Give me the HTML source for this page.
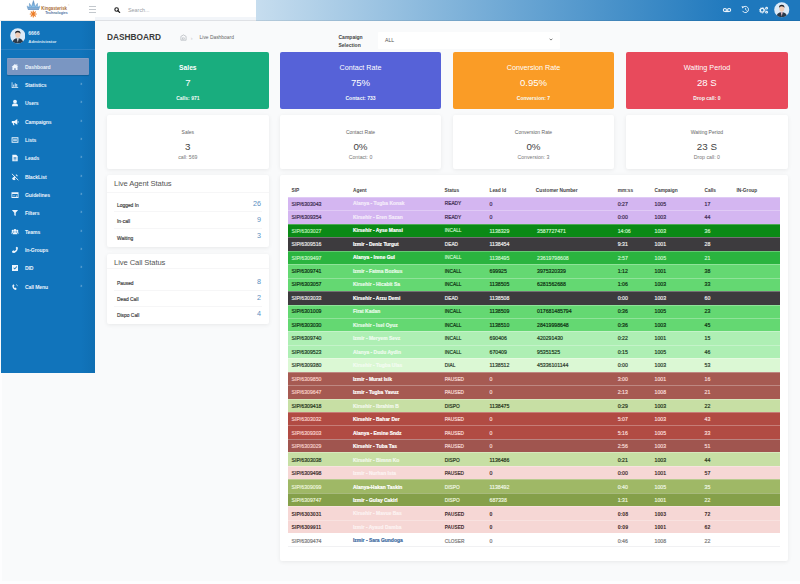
<!DOCTYPE html>
<html><head><meta charset="utf-8">
<style>
*{margin:0;padding:0;box-sizing:border-box}
html,body{width:800px;height:584px;overflow:hidden}
body{background:#f9fafb;font-family:"Liberation Sans",sans-serif;position:relative;color:#333}
.abs{position:absolute}
#hdr{position:absolute;left:0;top:0;width:800px;height:21px;background:linear-gradient(to right,#ffffff 95px,#1e78bd 735px,#1e78bd 800px)}
#hdrL{position:absolute;left:0;top:0;width:256px;height:17.3px;background:#fff}
#hdrL2{position:absolute;left:95px;top:17.3px;width:161px;height:3.7px;background:#f2f5f9}
#hdrline{position:absolute;left:0;top:20.3px;width:800px;height:1px;background:rgba(0,0,0,0.08)}
#side{position:absolute;left:1px;top:21px;width:93.7px;height:351.7px;background:linear-gradient(to right,#1174bb 85%,#0f6eb2 100%)}
.mi{position:absolute;left:25px;font-size:5.1px;letter-spacing:-0.12px;font-weight:bold;color:#eaf3fb;line-height:8px;white-space:nowrap}
.chev{position:absolute;left:79.5px;width:1.8px;height:1.8px;border-right:0.5px solid rgba(255,255,255,0.3);border-bottom:0.5px solid rgba(255,255,255,0.3);transform:rotate(-45deg)}
.card{position:absolute;border-radius:2px;text-align:center}
.c1t{position:absolute;left:0;width:100%;font-size:7.2px;line-height:8px;color:#fff}
.c1v{position:absolute;left:0;width:100%;font-size:9.6px;line-height:10px;color:#fff}
.c1s{position:absolute;left:0;width:100%;font-size:5px;font-weight:bold;line-height:6px;color:#f4fbf8}
.wc{background:#fff;box-shadow:0 1px 4px rgba(0,0,0,0.075)}
.c2t{position:absolute;left:0;width:100%;font-size:5.0px;line-height:6px;color:#666}
.c2v{position:absolute;left:0;width:100%;font-size:9.8px;line-height:10px;color:#444}
.c2s{position:absolute;left:0;width:100%;font-size:5.2px;line-height:6px;color:#777}
.pt{position:absolute;font-size:7.6px;color:#555;white-space:nowrap;letter-spacing:-0.1px}
.lr{position:absolute;left:10px;font-size:4.9px;font-weight:normal;-webkit-text-stroke:0.15px #3a3a3a;color:#3a3a3a;white-space:nowrap}
.lv{position:absolute;right:8px;font-size:7.2px;color:#5b8fbf;white-space:nowrap}
.hl{position:absolute;left:7px;right:7px;height:1px;background:#f6f6f7}
.th{position:absolute;top:188px;font-size:4.8px;font-weight:bold;color:#444;white-space:nowrap}
#tbody{position:absolute;left:288px;top:197px;width:492px;border-bottom:1px solid #f1f1f3}
.tr{position:relative;width:492px;height:13.45px;box-shadow:inset 0 0.9px 0 rgba(255,255,255,0.28)}
.tr span{position:absolute;top:3.2px;font-size:5.2px;line-height:6px;white-space:nowrap;-webkit-text-stroke:0.18px currentColor}
</style></head><body>
<div id="hdr"></div>
<div id="hdrL"></div>
<div id="hdrL2"></div>
<div id="hdrline"></div>

<!-- logo -->
<svg class="abs" style="left:24px;top:0px" width="48" height="19" viewBox="0 0 48 19">
  <defs><linearGradient id="cg" x1="0" y1="0" x2="0" y2="1"><stop offset="0" stop-color="#4f88bf"/><stop offset="0.75" stop-color="#8cc0e8"/><stop offset="1" stop-color="#5d92c4"/></linearGradient></defs>
  <path d="M3.1 5.9 L5.2 7.3 L5.5 3.3 L7.5 6.6 L9.4 0.4 L11.3 6.6 L13.4 3.3 L13.7 7.3 L15.8 5.9 L15.2 8.6 L3.7 8.6 Z" fill="url(#cg)" stroke="#4b80b5" stroke-width="0.35"/>
  <path d="M3.9 9.4 L15 9.4" stroke="#5a8cbd" stroke-width="0.9"/>
  <g stroke="#ec7a22" stroke-width="1.15" stroke-linecap="round">
    <path d="M9.25 11 L9.25 17"/><path d="M6.25 14 L12.25 14"/><path d="M7.15 11.9 L11.35 16.1"/><path d="M7.15 16.1 L11.35 11.9"/>
  </g>
  <circle cx="9.25" cy="14" r="1.2" fill="#ec7a22"/>
  <text x="17.3" y="10" font-family="Liberation Sans" font-weight="bold" font-size="5" fill="#a96a30" textLength="25.6" lengthAdjust="spacingAndGlyphs">Kingasterisk</text>
  <text x="44" y="5.6" font-family="Liberation Sans" font-size="2" fill="#b8773c">®</text>
  <text x="21.2" y="14" font-family="Liberation Sans" font-weight="bold" font-size="3.6" fill="#4d72a0" textLength="22.6" lengthAdjust="spacingAndGlyphs">Technologies</text>
</svg>
<!-- hamburger -->
<div class="abs" style="left:88.5px;top:6px;width:7.5px;height:0.8px;background:#c3c8cd"></div>
<div class="abs" style="left:88.5px;top:9.2px;width:7.5px;height:0.8px;background:#c3c8cd"></div>
<div class="abs" style="left:88.5px;top:12.4px;width:7.5px;height:0.8px;background:#c3c8cd"></div>
<!-- search icon -->
<svg class="abs" style="left:114.2px;top:6.6px" width="7" height="6" viewBox="0 0 7 6"><circle cx="2.6" cy="2.5" r="1.75" fill="none" stroke="#1a1a1a" stroke-width="1.15"/><path d="M3.9 3.8 L5.6 5.4" stroke="#1a1a1a" stroke-width="1.3" stroke-linecap="round"/></svg>
<div class="abs" style="left:128px;top:6.6px;font-size:5.4px;color:#9aa0a6">Search...</div>

<!-- header right icons -->
<svg class="abs" style="left:722px;top:5.5px" width="10" height="8" viewBox="0 0 10 8"><circle cx="2.9" cy="4" r="1.55" fill="none" stroke="#eef5fc" stroke-width="1.1"/><circle cx="7.1" cy="4" r="1.55" fill="none" stroke="#eef5fc" stroke-width="1.1"/><rect x="2.9" y="5" width="4.2" height="1.1" fill="#eef5fc"/></svg>
<svg class="abs" style="left:740.5px;top:5px" width="9" height="9" viewBox="0 0 9 9"><path d="M1.9 2.6 A3.1 3.1 0 1 1 1.6 5.9" fill="none" stroke="#eef5fc" stroke-width="0.95"/><path d="M0.5 1.2 L2.9 1.5 L1.5 3.4 Z" fill="#eef5fc"/><path d="M4.6 2.9 L4.6 4.7 L5.8 5.5" fill="none" stroke="#eef5fc" stroke-width="0.8"/></svg>
<svg class="abs" style="left:758.5px;top:5.5px" width="10" height="8" viewBox="0 0 10 8"><circle cx="3.2" cy="4.3" r="1.9" fill="none" stroke="#eef5fc" stroke-width="1.3"/><circle cx="3.2" cy="4.3" r="2.7" fill="none" stroke="#eef5fc" stroke-width="0.9" stroke-dasharray="0.9 0.8"/><circle cx="7.6" cy="2.2" r="1.35" fill="#eef5fc"/><circle cx="7.6" cy="6.2" r="1.35" fill="#eef5fc"/><circle cx="7.6" cy="2.2" r="0.45" fill="#2a7fc1"/><circle cx="7.6" cy="6.2" r="0.45" fill="#2a7fc1"/></svg>
<svg class="abs" style="left:774px;top:2.3px" width="15.5" height="15.5" viewBox="0 0 16 16">
  <defs><clipPath id="av1"><circle cx="8" cy="8" r="7.8"/></clipPath></defs>
  <circle cx="8" cy="8" r="7.8" fill="#dceaf7"/>
  <g clip-path="url(#av1)">
    <path d="M2 16 Q3 10.5 8 10.5 Q13 10.5 14 16 Z" fill="#2b3a4a"/>
    <path d="M7 10.5 L8 15 L9 10.5 Z" fill="#f3c6cf"/>
    <ellipse cx="8" cy="6.8" rx="2.6" ry="3.2" fill="#f1cdb7"/>
    <path d="M5.2 6 Q5 2.8 8 2.8 Q11 2.8 10.8 6 Q10 4.4 8 4.4 Q6 4.4 5.2 6 Z" fill="#1f232b"/>
  </g>
</svg>

<div class="abs" style="left:0;top:372px;width:2px;height:212px;background:#fdfdfe"></div>
<div class="abs" style="left:0;top:581px;width:800px;height:3px;background:#fdfdfe"></div>
<!-- sidebar -->
<div id="side"></div>
<svg class="abs" style="left:9.6px;top:28.4px" width="15.6" height="15.6" viewBox="0 0 16 16">
  <defs><clipPath id="av2"><circle cx="8" cy="8" r="7.8"/></clipPath></defs>
  <circle cx="8" cy="8" r="7.8" fill="#dceaf7"/>
  <g clip-path="url(#av2)">
    <path d="M2 16 Q3 10.5 8 10.5 Q13 10.5 14 16 Z" fill="#2b3a4a"/>
    <path d="M7 10.5 L8 15 L9 10.5 Z" fill="#e9eef5"/>
    <ellipse cx="8" cy="6.8" rx="2.6" ry="3.2" fill="#f1cdb7"/>
    <path d="M5.2 6 Q5 2.8 8 2.8 Q11 2.8 10.8 6 Q10 4.4 8 4.4 Q6 4.4 5.2 6 Z" fill="#1f232b"/>
  </g>
</svg>
<div class="abs" style="left:28.3px;top:30.4px;font-size:5px;font-weight:bold;color:#e6f1fb">6666</div>
<div class="abs" style="left:28.3px;top:39.2px;font-size:4.3px;font-weight:bold;color:#d7e7f6">Administrator</div>
<div class="abs" style="left:1px;top:48.6px;width:93.7px;height:1.4px;background:#2b80c2"></div>
<div class="abs" style="left:6.8px;top:58.1px;width:82.2px;height:16.7px;background:#7a96c2;border-radius:1px;box-shadow:0 0.8px 1px rgba(0,0,0,0.18), inset 0 0.8px 0 rgba(255,255,255,0.12)"></div>
<svg class="abs" style="left:10.8px;top:62.50px" width="8" height="8" viewBox="0 0 8 8" fill="#eef5fc"><path d="M0.6 4.1 L3.9 1 L7.3 4.1 L6.5 4.1 L6.5 7 L4.7 7 L4.7 5.2 L3.2 5.2 L3.2 7 L1.4 7 L1.4 4.1 Z"/><rect x="5.4" y="1.2" width="0.9" height="1.8"/></svg><div class="mi" style="top:62.50px">Dashboard</div>
<svg class="abs" style="left:10.8px;top:80.85px" width="8" height="8" viewBox="0 0 8 8" fill="#eef5fc"><path d="M0.7 1.2 L1.4 1.2 L1.4 6.3 L7.2 6.3 L7.2 7 L0.7 7 Z"/><rect x="2.3" y="3.6" width="0.9" height="2.2"/><rect x="3.8" y="2.3" width="0.9" height="3.5"/><rect x="5.3" y="3" width="0.9" height="2.8"/></svg><div class="mi" style="top:80.85px">Statistics</div><i class="chev" style="top:82.8px"></i>
<svg class="abs" style="left:10.8px;top:99.20px" width="8" height="8" viewBox="0 0 8 8" fill="#eef5fc"><circle cx="4" cy="2.6" r="1.9"/><path d="M0.9 7.2 Q0.9 4.7 2.7 4.6 L5.3 4.6 Q7.1 4.7 7.1 7.2 Z"/></svg><div class="mi" style="top:99.20px">Users</div><i class="chev" style="top:101.2px"></i>
<svg class="abs" style="left:10.8px;top:117.55px" width="8" height="8" viewBox="0 0 8 8" fill="#eef5fc"><path d="M0.8 3 L3.4 3 L6.3 1 L6.3 6.8 L3.4 4.9 L2.8 4.9 L3.5 7.2 L2.3 7.2 L1.6 4.9 L0.8 4.9 Z"/><rect x="6.7" y="3.2" width="0.8" height="1.5"/></svg><div class="mi" style="top:117.55px">Campaigns</div><i class="chev" style="top:119.6px"></i>
<svg class="abs" style="left:10.8px;top:135.90px" width="8" height="8" viewBox="0 0 8 8" fill="#eef5fc"><path d="M0.6 1.2 L7.4 1.2 L7.4 6.8 L0.6 6.8 Z M1.5 2.2 L1.5 5.8 L6.5 5.8 L6.5 2.2 Z"/><rect x="2.1" y="2.9" width="3.8" height="0.7"/><rect x="2.1" y="4.3" width="3.8" height="0.7"/></svg><div class="mi" style="top:135.90px">Lists</div><i class="chev" style="top:137.9px"></i>
<svg class="abs" style="left:10.8px;top:154.25px" width="8" height="8" viewBox="0 0 8 8" fill="#eef5fc"><path d="M1.3 0.7 L5.2 0.7 L6.7 2.2 L6.7 7.3 L1.3 7.3 Z"/><rect x="2.6" y="3.2" width="2.8" height="0.6" fill="#1a72b8"/><rect x="2.6" y="4.4" width="2.8" height="0.6" fill="#1a72b8"/><rect x="2.6" y="5.6" width="2.8" height="0.6" fill="#1a72b8"/></svg><div class="mi" style="top:154.25px">Leads</div><i class="chev" style="top:156.2px"></i>
<svg class="abs" style="left:10.8px;top:172.60px" width="8" height="8" viewBox="0 0 8 8" fill="#eef5fc"><path d="M0.9 0.8 L7.3 7.2" stroke="#eef5fc" stroke-width="0.9"/><path d="M1.2 5.2 Q2.6 3.7 3.7 3.2 L4.7 4.2 L3.6 5.1 L4.6 6.6 L3.1 7.3 Q1.8 7.1 1.2 6 Z"/><path d="M5.2 1.2 L6.8 2.8 L6.2 3.6 L4.6 2 Z"/></svg><div class="mi" style="top:172.60px">BlackList</div><i class="chev" style="top:174.6px"></i>
<svg class="abs" style="left:10.8px;top:190.95px" width="8" height="8" viewBox="0 0 8 8" fill="#eef5fc"><path d="M0.5 1.3 L7.5 1.3 L7.5 6.9 L0.5 6.9 Z M1.3 3.1 L1.3 6.1 L6.7 6.1 L6.7 3.1 Z"/><rect x="4.8" y="4.6" width="1.4" height="1"/><rect x="1.8" y="4.6" width="2.2" height="0.6"/></svg><div class="mi" style="top:190.95px">Guidelines</div><i class="chev" style="top:193.0px"></i>
<svg class="abs" style="left:10.8px;top:209.30px" width="8" height="8" viewBox="0 0 8 8" fill="#eef5fc"><path d="M0.9 0.9 L7.1 0.9 L4.7 3.8 L4.7 7.1 L3.3 6.3 L3.3 3.8 Z"/></svg><div class="mi" style="top:209.30px">Filters</div><i class="chev" style="top:211.3px"></i>
<svg class="abs" style="left:10.8px;top:227.65px" width="8" height="8" viewBox="0 0 8 8" fill="#eef5fc"><circle cx="4" cy="2.5" r="1.45"/><circle cx="1.7" cy="2.9" r="1.05"/><circle cx="6.3" cy="2.9" r="1.05"/><path d="M1.6 6.3 Q1.6 4.1 4 4.1 Q6.4 4.1 6.4 6.3 Z"/><path d="M0.1 5.6 Q0.1 4 1.7 4 L2.5 4.2 Q1.3 4.9 1.3 5.6 Z"/><path d="M7.9 5.6 Q7.9 4 6.3 4 L5.5 4.2 Q6.7 4.9 6.7 5.6 Z"/></svg><div class="mi" style="top:227.65px">Teams</div><i class="chev" style="top:229.7px"></i>
<svg class="abs" style="left:10.8px;top:246.00px" width="8" height="8" viewBox="0 0 8 8" fill="#eef5fc"><path d="M6.9 5.3 L5.6 4.2 L4.6 5 Q3.2 4.3 2.6 3 L3.4 2 L2.4 0.7 L1.1 1.4 Q0.9 4.6 4.2 6.8 Q5.4 7.3 6.9 6.6 Z" transform="scale(-1,1) translate(-8,0)"/></svg><div class="mi" style="top:246.00px">In-Groups</div><i class="chev" style="top:248.0px"></i>
<svg class="abs" style="left:10.8px;top:264.35px" width="8" height="8" viewBox="0 0 8 8" fill="#eef5fc"><path d="M1 0.9 L7 0.9 L7 7.1 L1 7.1 Z M2.3 4.1 L3.8 5.6 L6.2 2.8 L5.5 2.2 L3.8 4.3 L2.9 3.4 Z"/></svg><div class="mi" style="top:264.35px">DID</div><i class="chev" style="top:266.4px"></i>
<svg class="abs" style="left:10.8px;top:282.70px" width="8" height="8" viewBox="0 0 8 8" fill="#eef5fc"><path d="M2.6 1.2 L3.5 2.8 L2.8 3.6 Q3.1 4.6 3.7 5.1 L4.6 4.6 L5.8 5.9 L4.6 7 Q1.8 6.3 1.3 3 Q1.4 1.6 2.6 1.2 Z"/><path d="M5.2 1.4 Q6.3 1.9 6.5 3.2" fill="none" stroke="#eef5fc" stroke-width="0.6"/></svg><div class="mi" style="top:282.70px">Call Menu</div><i class="chev" style="top:284.7px"></i>

<!-- page title -->
<div class="abs" style="left:106.6px;top:30.8px;font-size:9.4px;font-weight:bold;color:#3a3a3a;transform:scaleX(0.885);transform-origin:0 0">DASHBOARD</div>
<svg class="abs" style="left:179.5px;top:34px" width="7" height="7" viewBox="0 0 7 7"><path d="M0.9 2.4 L3.5 0.9 L6.1 2.4 L6.1 6.2 L0.9 6.2 Z" fill="none" stroke="#a4a9b0" stroke-width="0.6"/><rect x="2.5" y="3.9" width="2" height="1.2" fill="none" stroke="#a4a9b0" stroke-width="0.45"/></svg>
<div class="abs" style="left:190.8px;top:34.6px;font-size:5.4px;color:#c4c7cc">›</div>
<div class="abs" style="left:199.6px;top:35.4px;font-size:4.9px;color:#666">Live Dashboard</div>
<div class="abs" style="left:338.5px;top:33.4px;font-size:5px;font-weight:bold;color:#444;line-height:8px">Campaign<br>Selection</div>
<div class="abs" style="left:378px;top:31.5px;width:182px;height:17px;background:#fff;border-radius:1px"></div>
<div class="abs" style="left:385px;top:37px;font-size:5.2px;color:#555">ALL</div>
<svg class="abs" style="left:549px;top:38px" width="4" height="3" viewBox="0 0 4 3"><path d="M0.6 0.7 L2 2.1 L3.4 0.7" fill="none" stroke="#444" stroke-width="0.7"/></svg>

<!-- top color cards -->
<div class="card" style="left:107px;top:51.5px;width:161.7px;height:57.8px;background:#19ad7e">
  <div class="c1t" style="top:12.7px;font-weight:bold;font-size:6.7px">Sales</div><div class="c1v" style="top:26.7px">7</div><div class="c1s" style="top:43.1px">Calls: 971</div></div>
<div class="card" style="left:280px;top:51.5px;width:161px;height:57.8px;background:#5662d8">
  <div class="c1t" style="top:12.6px">Contact Rate</div><div class="c1v" style="top:26.7px">75%</div><div class="c1s" style="top:43.1px">Contact: 733</div></div>
<div class="card" style="left:452.8px;top:51.5px;width:161.4px;height:57.8px;background:#fa9c26">
  <div class="c1t" style="top:12.6px">Conversion Rate</div><div class="c1v" style="top:26.7px">0.95%</div><div class="c1s" style="top:43.1px">Conversion: 7</div></div>
<div class="card" style="left:626px;top:51.5px;width:161.8px;height:57.8px;background:#e84a5c">
  <div class="c1t" style="top:12.6px">Waiting Period</div><div class="c1v" style="top:26.7px">28 S</div><div class="c1s" style="top:43.1px">Drop call: 0</div></div>

<!-- white cards -->
<div class="card wc" style="left:107px;top:114.8px;width:161.7px;height:54.4px">
  <div class="c2t" style="top:14.3px">Sales</div><div class="c2v" style="top:27px">3</div><div class="c2s" style="top:39.7px">call: 569</div></div>
<div class="card wc" style="left:280px;top:114.8px;width:161px;height:54.4px">
  <div class="c2t" style="top:14.3px">Contact Rate</div><div class="c2v" style="top:27px">0%</div><div class="c2s" style="top:39.7px">Contact: 0</div></div>
<div class="card wc" style="left:452.8px;top:114.8px;width:161.4px;height:54.4px">
  <div class="c2t" style="top:14.3px">Conversion Rate</div><div class="c2v" style="top:27px">0%</div><div class="c2s" style="top:39.7px">Conversion: 3</div></div>
<div class="card wc" style="left:626px;top:114.8px;width:161.8px;height:54.4px">
  <div class="c2t" style="top:14.3px">Waiting Period</div><div class="c2v" style="top:27px">23 S</div><div class="c2s" style="top:39.7px">Drop call: 0</div></div>

<!-- live agent status -->
<div class="card wc" style="left:107px;top:174.6px;width:162px;height:72.4px;text-align:left">
  <div class="pt" style="left:7.1px;top:4.6px">Live Agent Status</div>
  <div class="hl" style="top:17px;left:0;right:0"></div>
  <div class="lr" style="top:28.8px">Logged In</div><div class="lv" style="top:24.8px">26</div>
  <div class="hl" style="top:36.5px"></div>
  <div class="lr" style="top:44.8px">In-call</div><div class="lv" style="top:40px">9</div>
  <div class="hl" style="top:53px"></div>
  <div class="lr" style="top:61px">Waiting</div><div class="lv" style="top:56.6px">3</div>
</div>
<!-- live call status -->
<div class="card wc" style="left:107px;top:253.8px;width:162px;height:70.2px;text-align:left">
  <div class="pt" style="left:7.1px;top:4.3px">Live Call Status</div>
  <div class="hl" style="top:14.6px;left:0;right:0"></div>
  <div class="lr" style="top:26.8px">Paused</div><div class="lv" style="top:23.5px">8</div>
  <div class="hl" style="top:36px"></div>
  <div class="lr" style="top:43.6px">Dead Call</div><div class="lv" style="top:39px">2</div>
  <div class="hl" style="top:52.2px"></div>
  <div class="lr" style="top:59px">Dispo Call</div><div class="lv" style="top:55.6px">4</div>
</div>

<!-- table card -->
<div class="card wc" style="left:280px;top:174.6px;width:507.8px;height:386.4px"></div>
<div class="th" style="left:291.5px">SIP</div>
<div class="th" style="left:353px">Agent</div>
<div class="th" style="left:444.5px">Status</div>
<div class="th" style="left:489.5px">Lead Id</div>
<div class="th" style="left:535.8px">Customer Number</div>
<div class="th" style="left:617.7px">mm:ss</div>
<div class="th" style="left:654.5px">Campaign</div>
<div class="th" style="left:704.5px">Calls</div>
<div class="th" style="left:736.4px">IN-Group</div>
<div id="tbody"><div class="tr" style="background:#d4b6f1"><span style="left:3.5px;top:3.60px;color:#3b2a4d;">SIP/6303043</span><span style="left:65.0px;top:3.60px;color:#f4ecfb;font-weight:bold;font-size:4.95px;margin-top:0.8px;">Alanya - Tugba Konak</span><span style="left:156.8px;top:3.60px;color:#3b2a4d;font-size:4.75px;margin-top:0.9px;">READY</span><span style="left:201.5px;top:3.60px;color:#3b2a4d;">0</span><span style="left:329.7px;top:3.60px;color:#3b2a4d;">0:27</span><span style="left:366.5px;top:3.60px;color:#3b2a4d;">1005</span><span style="left:416.5px;top:3.60px;color:#3b2a4d;">17</span></div>
<div class="tr" style="background:#d4b6f1"><span style="left:3.5px;top:3.65px;color:#3b2a4d;">SIP/6309354</span><span style="left:65.0px;top:3.65px;color:#f4ecfb;font-weight:bold;font-size:4.95px;margin-top:0.8px;">Kirsehir - Eren Sazan</span><span style="left:156.8px;top:3.65px;color:#3b2a4d;font-size:4.75px;margin-top:0.9px;">READY</span><span style="left:201.5px;top:3.65px;color:#3b2a4d;">0</span><span style="left:329.7px;top:3.65px;color:#3b2a4d;">0:00</span><span style="left:366.5px;top:3.65px;color:#3b2a4d;">1003</span><span style="left:416.5px;top:3.65px;color:#3b2a4d;">44</span></div>
<div class="tr" style="background:#0b8a16"><span style="left:3.5px;top:3.69px;color:#b5eeb5;">SIP/6303027</span><span style="left:65.0px;top:3.69px;color:#ffffff;font-weight:bold;font-size:4.95px;margin-top:0.8px;">Kirsehir - Ayse Mansi</span><span style="left:156.8px;top:3.69px;color:#c4f2c4;font-size:4.75px;margin-top:0.9px;">INCALL</span><span style="left:201.5px;top:3.69px;color:#c4f2c4;">1138329</span><span style="left:249.0px;top:3.69px;color:#c4f2c4;">3587727471</span><span style="left:329.7px;top:3.69px;color:#c4f2c4;">14:06</span><span style="left:366.5px;top:3.69px;color:#c4f2c4;">1003</span><span style="left:416.5px;top:3.69px;color:#c4f2c4;">36</span></div>
<div class="tr" style="background:#3d3b3e"><span style="left:3.5px;top:3.74px;color:#e3e3e3;">SIP/6309516</span><span style="left:65.0px;top:3.74px;color:#ffffff;font-weight:bold;font-size:4.95px;margin-top:0.8px;">Izmir - Deniz Turgut</span><span style="left:156.8px;top:3.74px;color:#ececec;font-size:4.75px;margin-top:0.9px;">DEAD</span><span style="left:201.5px;top:3.74px;color:#ececec;">1138454</span><span style="left:329.7px;top:3.74px;color:#ececec;">9:31</span><span style="left:366.5px;top:3.74px;color:#ececec;">1001</span><span style="left:416.5px;top:3.74px;color:#ececec;">28</span></div>
<div class="tr" style="background:#2ab43f"><span style="left:3.5px;top:3.78px;color:#c2f2c4;">SIP/6309497</span><span style="left:65.0px;top:3.78px;color:#ffffff;font-weight:bold;font-size:4.95px;margin-top:0.8px;">Alanya - Irene Gul</span><span style="left:156.8px;top:3.78px;color:#c8f4ca;font-size:4.75px;margin-top:0.9px;">INCALL</span><span style="left:201.5px;top:3.78px;color:#c8f4ca;">1138495</span><span style="left:249.0px;top:3.78px;color:#c8f4ca;">23619798608</span><span style="left:329.7px;top:3.78px;color:#c8f4ca;">2:57</span><span style="left:366.5px;top:3.78px;color:#c8f4ca;">1005</span><span style="left:416.5px;top:3.78px;color:#c8f4ca;">21</span></div>
<div class="tr" style="background:#64d872"><span style="left:3.5px;top:3.83px;color:#0c2e10;">SIP/6309741</span><span style="left:65.0px;top:3.83px;color:#e8fbe9;font-weight:bold;font-size:4.95px;margin-top:0.8px;">Izmir - Fatma Bozkus</span><span style="left:156.8px;top:3.83px;color:#0c2e10;font-size:4.75px;margin-top:0.9px;">INCALL</span><span style="left:201.5px;top:3.83px;color:#0c2e10;">699925</span><span style="left:249.0px;top:3.83px;color:#0c2e10;">3975320339</span><span style="left:329.7px;top:3.83px;color:#0c2e10;">1:12</span><span style="left:366.5px;top:3.83px;color:#0c2e10;">1001</span><span style="left:416.5px;top:3.83px;color:#0c2e10;">38</span></div>
<div class="tr" style="background:#64d872"><span style="left:3.5px;top:3.87px;color:#0c2e10;">SIP/6303057</span><span style="left:65.0px;top:3.87px;color:#e8fbe9;font-weight:bold;font-size:4.95px;margin-top:0.8px;">Kirsehir - Hicabit Sa</span><span style="left:156.8px;top:3.87px;color:#0c2e10;font-size:4.75px;margin-top:0.9px;">INCALL</span><span style="left:201.5px;top:3.87px;color:#0c2e10;">1138505</span><span style="left:249.0px;top:3.87px;color:#0c2e10;">6281562688</span><span style="left:329.7px;top:3.87px;color:#0c2e10;">1:06</span><span style="left:366.5px;top:3.87px;color:#0c2e10;">1003</span><span style="left:416.5px;top:3.87px;color:#0c2e10;">33</span></div>
<div class="tr" style="background:#3d3b3e"><span style="left:3.5px;top:3.92px;color:#e3e3e3;">SIP/6303033</span><span style="left:65.0px;top:3.92px;color:#ffffff;font-weight:bold;font-size:4.95px;margin-top:0.8px;">Kirsehir - Arzu Demi</span><span style="left:156.8px;top:3.92px;color:#ececec;font-size:4.75px;margin-top:0.9px;">DEAD</span><span style="left:201.5px;top:3.92px;color:#ececec;">1138508</span><span style="left:329.7px;top:3.92px;color:#ececec;">0:00</span><span style="left:366.5px;top:3.92px;color:#ececec;">1003</span><span style="left:416.5px;top:3.92px;color:#ececec;">60</span></div>
<div class="tr" style="background:#64d872"><span style="left:3.5px;top:3.96px;color:#0c2e10;">SIP/6301009</span><span style="left:65.0px;top:3.96px;color:#e8fbe9;font-weight:bold;font-size:4.95px;margin-top:0.8px;">Firat Kadan</span><span style="left:156.8px;top:3.96px;color:#0c2e10;font-size:4.75px;margin-top:0.9px;">INCALL</span><span style="left:201.5px;top:3.96px;color:#0c2e10;">1138509</span><span style="left:249.0px;top:3.96px;color:#0c2e10;">017681485794</span><span style="left:329.7px;top:3.96px;color:#0c2e10;">0:36</span><span style="left:366.5px;top:3.96px;color:#0c2e10;">1005</span><span style="left:416.5px;top:3.96px;color:#0c2e10;">23</span></div>
<div class="tr" style="background:#64d872"><span style="left:3.5px;top:4.00px;color:#0c2e10;">SIP/6303030</span><span style="left:65.0px;top:4.00px;color:#e8fbe9;font-weight:bold;font-size:4.95px;margin-top:0.8px;">Kirsehir - Isel Oyuz</span><span style="left:156.8px;top:4.00px;color:#0c2e10;font-size:4.75px;margin-top:0.9px;">INCALL</span><span style="left:201.5px;top:4.00px;color:#0c2e10;">1138510</span><span style="left:249.0px;top:4.00px;color:#0c2e10;">28419998648</span><span style="left:329.7px;top:4.00px;color:#0c2e10;">0:36</span><span style="left:366.5px;top:4.00px;color:#0c2e10;">1003</span><span style="left:416.5px;top:4.00px;color:#0c2e10;">45</span></div>
<div class="tr" style="background:#aeefb4"><span style="left:3.5px;top:4.05px;color:#1c3a1e;">SIP/6309740</span><span style="left:65.0px;top:4.05px;color:#eefcef;font-weight:bold;font-size:4.95px;margin-top:0.8px;">Izmir - Meryem Sevz</span><span style="left:156.8px;top:4.05px;color:#1c3a1e;font-size:4.75px;margin-top:0.9px;">INCALL</span><span style="left:201.5px;top:4.05px;color:#1c3a1e;">690406</span><span style="left:249.0px;top:4.05px;color:#1c3a1e;">420291430</span><span style="left:329.7px;top:4.05px;color:#1c3a1e;">0:22</span><span style="left:366.5px;top:4.05px;color:#1c3a1e;">1001</span><span style="left:416.5px;top:4.05px;color:#1c3a1e;">15</span></div>
<div class="tr" style="background:#aeefb4"><span style="left:3.5px;top:4.09px;color:#1c3a1e;">SIP/6309523</span><span style="left:65.0px;top:4.09px;color:#eefcef;font-weight:bold;font-size:4.95px;margin-top:0.8px;">Alanya - Dudu Aydin</span><span style="left:156.8px;top:4.09px;color:#1c3a1e;font-size:4.75px;margin-top:0.9px;">INCALL</span><span style="left:201.5px;top:4.09px;color:#1c3a1e;">670409</span><span style="left:249.0px;top:4.09px;color:#1c3a1e;">95351525</span><span style="left:329.7px;top:4.09px;color:#1c3a1e;">0:15</span><span style="left:366.5px;top:4.09px;color:#1c3a1e;">1005</span><span style="left:416.5px;top:4.09px;color:#1c3a1e;">46</span></div>
<div class="tr" style="background:#dbf8d4"><span style="left:3.5px;top:4.14px;color:#2a3a2a;">SIP/6309380</span><span style="left:65.0px;top:4.14px;color:#f4fdf2;font-weight:bold;font-size:4.95px;margin-top:0.8px;">Kirsehir - Tugba Ulas</span><span style="left:156.8px;top:4.14px;color:#2a3a2a;font-size:4.75px;margin-top:0.9px;">DIAL</span><span style="left:201.5px;top:4.14px;color:#2a3a2a;">1138512</span><span style="left:249.0px;top:4.14px;color:#2a3a2a;">45336101144</span><span style="left:329.7px;top:4.14px;color:#2a3a2a;">0:00</span><span style="left:366.5px;top:4.14px;color:#2a3a2a;">1003</span><span style="left:416.5px;top:4.14px;color:#2a3a2a;">53</span></div>
<div class="tr" style="background:#a65a52"><span style="left:3.5px;top:4.19px;color:#f6cdc6;">SIP/6309850</span><span style="left:65.0px;top:4.19px;color:#ffffff;font-weight:bold;font-size:4.95px;margin-top:0.8px;">Izmir - Murat Isik</span><span style="left:156.8px;top:4.19px;color:#f8dcd7;font-size:4.75px;margin-top:0.9px;">PAUSED</span><span style="left:201.5px;top:4.19px;color:#f8dcd7;">0</span><span style="left:329.7px;top:4.19px;color:#f8dcd7;">3:00</span><span style="left:366.5px;top:4.19px;color:#f8dcd7;">1001</span><span style="left:416.5px;top:4.19px;color:#f8dcd7;">16</span></div>
<div class="tr" style="background:#a65a52"><span style="left:3.5px;top:4.23px;color:#f6cdc6;">SIP/6309647</span><span style="left:65.0px;top:4.23px;color:#ffffff;font-weight:bold;font-size:4.95px;margin-top:0.8px;">Izmir - Tugba Yavuz</span><span style="left:156.8px;top:4.23px;color:#f8dcd7;font-size:4.75px;margin-top:0.9px;">PAUSED</span><span style="left:201.5px;top:4.23px;color:#f8dcd7;">0</span><span style="left:329.7px;top:4.23px;color:#f8dcd7;">2:13</span><span style="left:366.5px;top:4.23px;color:#f8dcd7;">1008</span><span style="left:416.5px;top:4.23px;color:#f8dcd7;">21</span></div>
<div class="tr" style="background:#c7dfa4"><span style="left:3.5px;top:4.28px;color:#243318;">SIP/6309418</span><span style="left:65.0px;top:4.28px;color:#f3f9ec;font-weight:bold;font-size:4.95px;margin-top:0.8px;">Kirsehir - Ibrahim B</span><span style="left:156.8px;top:4.28px;color:#243318;font-size:4.75px;margin-top:0.9px;">DISPO</span><span style="left:201.5px;top:4.28px;color:#243318;">1138475</span><span style="left:329.7px;top:4.28px;color:#243318;">0:29</span><span style="left:366.5px;top:4.28px;color:#243318;">1003</span><span style="left:416.5px;top:4.28px;color:#243318;">22</span></div>
<div class="tr" style="background:#b14b43"><span style="left:3.5px;top:4.32px;color:#f7cfca;">SIP/6303032</span><span style="left:65.0px;top:4.32px;color:#ffffff;font-weight:bold;font-size:4.95px;margin-top:0.8px;">Kirsehir - Bahar Der</span><span style="left:156.8px;top:4.32px;color:#f9dcd8;font-size:4.75px;margin-top:0.9px;">PAUSED</span><span style="left:201.5px;top:4.32px;color:#f9dcd8;">0</span><span style="left:329.7px;top:4.32px;color:#f9dcd8;">5:07</span><span style="left:366.5px;top:4.32px;color:#f9dcd8;">1003</span><span style="left:416.5px;top:4.32px;color:#f9dcd8;">43</span></div>
<div class="tr" style="background:#b14b43"><span style="left:3.5px;top:4.37px;color:#f7cfca;">SIP/6309303</span><span style="left:65.0px;top:4.37px;color:#ffffff;font-weight:bold;font-size:4.95px;margin-top:0.8px;">Alanya - Emine Sndz</span><span style="left:156.8px;top:4.37px;color:#f9dcd8;font-size:4.75px;margin-top:0.9px;">PAUSED</span><span style="left:201.5px;top:4.37px;color:#f9dcd8;">0</span><span style="left:329.7px;top:4.37px;color:#f9dcd8;">5:16</span><span style="left:366.5px;top:4.37px;color:#f9dcd8;">1005</span><span style="left:416.5px;top:4.37px;color:#f9dcd8;">33</span></div>
<div class="tr" style="background:#a0554f"><span style="left:3.5px;top:4.41px;color:#f3cdc9;">SIP/6303029</span><span style="left:65.0px;top:4.41px;color:#ffffff;font-weight:bold;font-size:4.95px;margin-top:0.8px;">Kirsehir - Tuba Tas</span><span style="left:156.8px;top:4.41px;color:#f6dad6;font-size:4.75px;margin-top:0.9px;">PAUSED</span><span style="left:201.5px;top:4.41px;color:#f6dad6;">0</span><span style="left:329.7px;top:4.41px;color:#f6dad6;">2:56</span><span style="left:366.5px;top:4.41px;color:#f6dad6;">1003</span><span style="left:416.5px;top:4.41px;color:#f6dad6;">51</span></div>
<div class="tr" style="background:#c7dfa4"><span style="left:3.5px;top:4.46px;color:#243318;">SIP/6303038</span><span style="left:65.0px;top:4.46px;color:#f3f9ec;font-weight:bold;font-size:4.95px;margin-top:0.8px;">Kirsehir - Bimnn Ko</span><span style="left:156.8px;top:4.46px;color:#243318;font-size:4.75px;margin-top:0.9px;">DISPO</span><span style="left:201.5px;top:4.46px;color:#243318;">1136486</span><span style="left:329.7px;top:4.46px;color:#243318;">0:21</span><span style="left:366.5px;top:4.46px;color:#243318;">1003</span><span style="left:416.5px;top:4.46px;color:#243318;">44</span></div>
<div class="tr" style="background:#f6d7d5"><span style="left:3.5px;top:4.50px;color:#3a2a2a;">SIP/6309498</span><span style="left:65.0px;top:4.50px;color:#fdf3f2;font-weight:bold;font-size:4.95px;margin-top:0.8px;">Izmir - Nurhan Ista</span><span style="left:156.8px;top:4.50px;color:#3a2a2a;font-size:4.75px;margin-top:0.9px;">PAUSED</span><span style="left:201.5px;top:4.50px;color:#3a2a2a;">0</span><span style="left:329.7px;top:4.50px;color:#3a2a2a;">0:00</span><span style="left:366.5px;top:4.50px;color:#3a2a2a;">1001</span><span style="left:416.5px;top:4.50px;color:#3a2a2a;">57</span></div>
<div class="tr" style="background:#9fb866"><span style="left:3.5px;top:4.54px;color:#eaf3da;">SIP/6309099</span><span style="left:65.0px;top:4.54px;color:#ffffff;font-weight:bold;font-size:4.95px;margin-top:0.8px;">Alanya-Hakan Taskin</span><span style="left:156.8px;top:4.54px;color:#eef6e2;font-size:4.75px;margin-top:0.9px;">DISPO</span><span style="left:201.5px;top:4.54px;color:#eef6e2;">1138492</span><span style="left:329.7px;top:4.54px;color:#eef6e2;">0:40</span><span style="left:366.5px;top:4.54px;color:#eef6e2;">1005</span><span style="left:416.5px;top:4.54px;color:#eef6e2;">35</span></div>
<div class="tr" style="background:#85a04a"><span style="left:3.5px;top:4.59px;color:#e6f0d5;">SIP/6309747</span><span style="left:65.0px;top:4.59px;color:#ffffff;font-weight:bold;font-size:4.95px;margin-top:0.8px;">Izmir - Gulay Cakirl</span><span style="left:156.8px;top:4.59px;color:#ecf4de;font-size:4.75px;margin-top:0.9px;">DISPO</span><span style="left:201.5px;top:4.59px;color:#ecf4de;">687338</span><span style="left:329.7px;top:4.59px;color:#ecf4de;">1:31</span><span style="left:366.5px;top:4.59px;color:#ecf4de;">1001</span><span style="left:416.5px;top:4.59px;color:#ecf4de;">22</span></div>
<div class="tr" style="background:#f6d7d5"><span style="left:3.5px;top:4.63px;color:#3a2727;font-weight:bold;-webkit-text-stroke:0;">SIP/6303031</span><span style="left:65.0px;top:4.63px;color:#fdf3f2;font-weight:bold;font-size:4.95px;margin-top:0.8px;">Kirsehir - Mavue Bas</span><span style="left:156.8px;top:4.63px;color:#3a2727;font-weight:bold;-webkit-text-stroke:0;font-size:4.75px;margin-top:0.9px;">PAUSED</span><span style="left:201.5px;top:4.63px;color:#3a2727;font-weight:bold;-webkit-text-stroke:0;">0</span><span style="left:329.7px;top:4.63px;color:#3a2727;font-weight:bold;-webkit-text-stroke:0;">0:08</span><span style="left:366.5px;top:4.63px;color:#3a2727;font-weight:bold;-webkit-text-stroke:0;">1003</span><span style="left:416.5px;top:4.63px;color:#3a2727;font-weight:bold;-webkit-text-stroke:0;">72</span></div>
<div class="tr" style="background:#f6d7d5"><span style="left:3.5px;top:4.68px;color:#3a2727;font-weight:bold;-webkit-text-stroke:0;">SIP/6309911</span><span style="left:65.0px;top:4.68px;color:#fdf3f2;font-weight:bold;font-size:4.95px;margin-top:0.8px;">Izmir - Ayaud Damba</span><span style="left:156.8px;top:4.68px;color:#3a2727;font-weight:bold;-webkit-text-stroke:0;font-size:4.75px;margin-top:0.9px;">PAUSED</span><span style="left:201.5px;top:4.68px;color:#3a2727;font-weight:bold;-webkit-text-stroke:0;">0</span><span style="left:329.7px;top:4.68px;color:#3a2727;font-weight:bold;-webkit-text-stroke:0;">0:09</span><span style="left:366.5px;top:4.68px;color:#3a2727;font-weight:bold;-webkit-text-stroke:0;">1001</span><span style="left:416.5px;top:4.68px;color:#3a2727;font-weight:bold;-webkit-text-stroke:0;">62</span></div>
<div class="tr" style="background:#ffffff"><span style="left:3.5px;top:4.72px;color:#7a7a7a;">SIP/6309474</span><span style="left:65.0px;top:4.72px;color:#3d6aa0;font-weight:bold;font-size:4.95px;margin-top:0.8px;">Izmir - Sara Gundoga</span><span style="left:156.8px;top:4.72px;color:#7a7a7a;font-size:4.75px;margin-top:0.9px;">CLOSER</span><span style="left:201.5px;top:4.72px;color:#7a7a7a;">0</span><span style="left:329.7px;top:4.72px;color:#7a7a7a;">0:46</span><span style="left:366.5px;top:4.72px;color:#7a7a7a;">1008</span><span style="left:416.5px;top:4.72px;color:#7a7a7a;">22</span></div></div>
</body></html>
